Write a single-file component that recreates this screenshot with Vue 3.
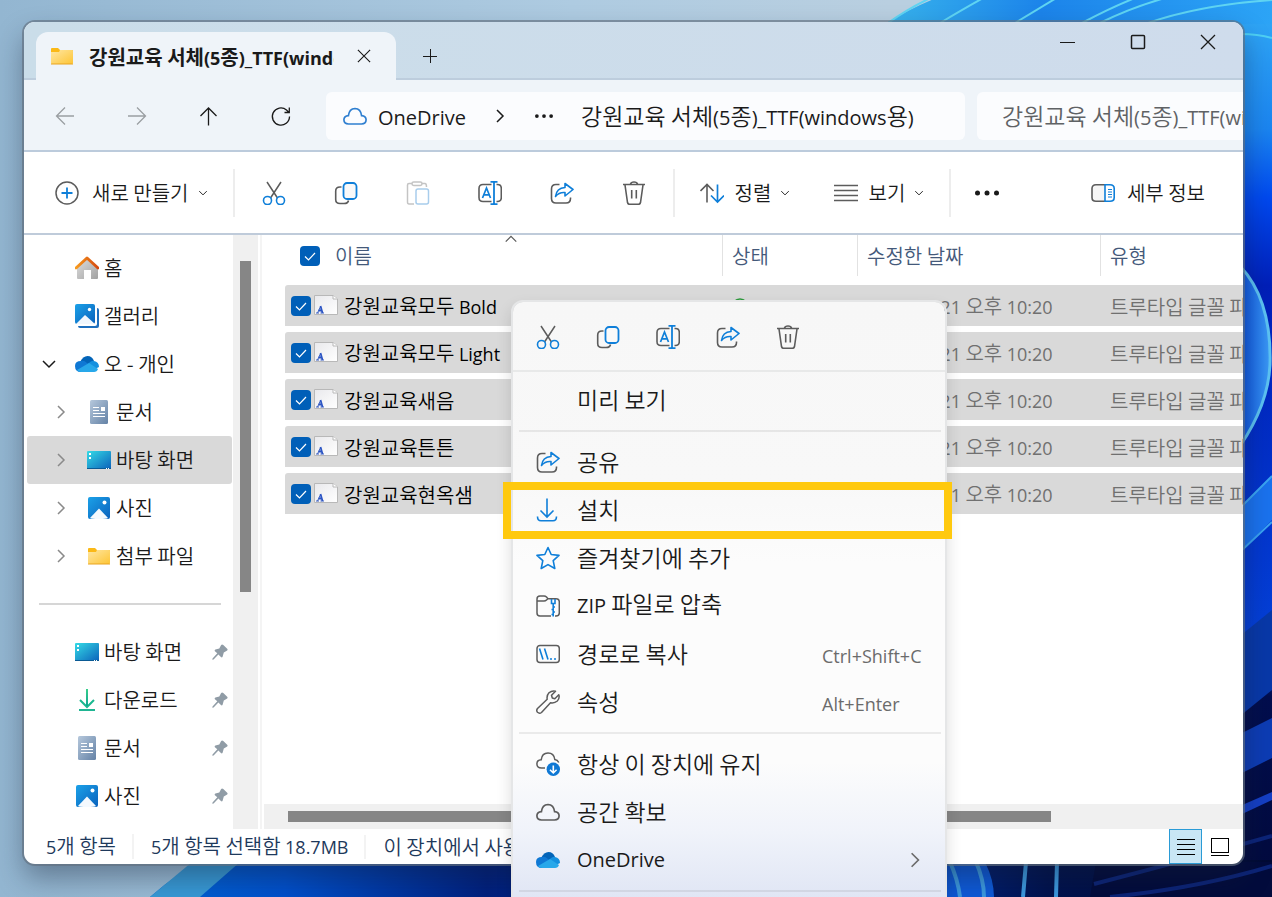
<template>
  <div class="desktop">
    <!-- fundo da área de trabalho -->
    <svg class="wallpaper" viewBox="0 0 1272 897" preserveAspectRatio="none" aria-hidden="true">
      <defs>
        <linearGradient id="wSky" x1="0" y1="0" x2="1" y2="0">
          <stop offset="0" stop-color="#93b6d1" />
          <stop offset="0.45" stop-color="#aecbe1" />
          <stop offset="0.7" stop-color="#b9cfe0" />
        </linearGradient>
        <linearGradient id="wTop" x1="0" y1="0" x2="1" y2="0">
          <stop offset="0" stop-color="#37b2ec" />
          <stop offset="0.4" stop-color="#1c84ea" />
          <stop offset="1" stop-color="#2ca4f6" />
        </linearGradient>
        <linearGradient id="wSide" x1="0" y1="0" x2="0" y2="1">
          <stop offset="0" stop-color="#2ea4f5" />
          <stop offset="0.12" stop-color="#1b85f0" />
          <stop offset="0.2" stop-color="#0048ee" />
          <stop offset="0.3" stop-color="#001fb8" />
          <stop offset="0.7" stop-color="#0440d8" />
          <stop offset="0.77" stop-color="#020e4e" />
          <stop offset="1" stop-color="#020a3c" />
        </linearGradient>
        <linearGradient id="wFloor" x1="0" y1="0" x2="1" y2="0">
          <stop offset="0" stop-color="#0064d4" />
          <stop offset="0.12" stop-color="#0050cc" />
          <stop offset="0.3" stop-color="#00207e" />
          <stop offset="0.62" stop-color="#0031a4" />
          <stop offset="0.8" stop-color="#01124e" />
          <stop offset="1" stop-color="#010a34" />
        </linearGradient>
        <linearGradient id="wPetal" x1="0" y1="0" x2="1" y2="0">
          <stop offset="0" stop-color="#0a50e0" />
          <stop offset="1" stop-color="#3c9af4" />
        </linearGradient>
      </defs>
      <rect width="1272" height="897" fill="url(#wSky)" />
      <path d="M888 22Q925 0 960 -10H1272V60H888Z" fill="url(#wTop)" />
      <g fill="none" stroke="#5fd4f2" stroke-width="2">
        <path d="M888 23Q912 6 935 -4" />
        <path d="M940 23Q965 8 985 -3" />
        <path d="M1015 23L1058 -3" />
        <path d="M1082 23Q1110 8 1135 -2" />
        <path d="M1100 23Q1130 8 1165 -2" />
        <path d="M1148 23Q1200 5 1272 0" />
      </g>
      <path d="M1240 24H1272V897H1240Z" fill="url(#wSide)" />
      <path d="M1240 34Q1258 34 1272 38" fill="none" stroke="#4ed0f4" stroke-width="2" />
      <path d="M1240 266Q1272 300 1270 365Q1268 405 1240 446Z" fill="url(#wPetal)" />
      <path d="M1240 266Q1272 300 1270 365Q1268 405 1240 446" fill="none" stroke="#5cc2f2" stroke-width="3" />
      <path d="M1240 508L1272 476V520L1240 552Z" fill="#1a72ee" />
      <path d="M1240 508L1272 476M1240 552L1272 522" fill="none" stroke="#3aa4f2" stroke-width="2" />
      <path d="M1240 636L1272 610V690L1240 716Z" fill="#0838a8" />
      <path d="M1240 734L1272 718V758L1240 774Z" fill="#0d3cb4" />
      <path d="M1240 806L1272 792V800L1240 815Z" fill="#153fc4" />
      <path d="M205 860H1272V897H150Q178 872 205 860Z" fill="url(#wFloor)" />
      <path d="M192 862H240L200 897H150Z" fill="#389ad6" />
      <path d="M945 862H985Q994 880 994 897H945Z" fill="#0e5ad8" />
      <path d="M950 862Q958 880 960 897M976 862Q984 880 984 897M1026 862L1023 897M1057 862L1056 897" fill="none" stroke="#3d9ae0" stroke-width="4" />
      <path d="M1096 862L1090 897H1272V862Z" fill="#020b3c" />
      <path d="M1094 884Q1180 862 1272 836M1110 897Q1200 888 1272 866" fill="none" stroke="#0c2478" stroke-width="4" />
    </svg>

    <!-- ícones reutilizados -->
    <svg class="sprite" aria-hidden="true">
      <defs>
        <linearGradient id="gFolder" x1="0" y1="0" x2="1" y2="1">
          <stop offset="0" stop-color="#ffe7a3" />
          <stop offset="1" stop-color="#fdc535" />
        </linearGradient>
        <linearGradient id="gPhoto" x1="0" y1="0" x2="1" y2="1">
          <stop offset="0" stop-color="#1ba1e8" />
          <stop offset="1" stop-color="#0a62bd" />
        </linearGradient>
        <linearGradient id="gDesk" x1="0" y1="0" x2="1" y2="1">
          <stop offset="0" stop-color="#34dbe6" />
          <stop offset="1" stop-color="#0c62bb" />
        </linearGradient>
        <linearGradient id="gDoc" x1="0" y1="0" x2="1" y2="1">
          <stop offset="0" stop-color="#b6c8dc" />
          <stop offset="1" stop-color="#6482a6" />
        </linearGradient>
        <linearGradient id="gHome" x1="0" y1="0" x2="1" y2="1">
          <stop offset="0" stop-color="#dedede" />
          <stop offset="1" stop-color="#a2a2a2" />
        </linearGradient>
        <linearGradient id="gRoof" x1="0" y1="0" x2="1" y2="0">
          <stop offset="0" stop-color="#f79a1e" />
          <stop offset="1" stop-color="#d5480f" />
        </linearGradient>
        <linearGradient id="gDown" x1="0" y1="0" x2="0" y2="1">
          <stop offset="0" stop-color="#37cf8a" />
          <stop offset="1" stop-color="#0fa393" />
        </linearGradient>
        <linearGradient id="gPage" x1="0" y1="0" x2="1" y2="1">
          <stop offset="0" stop-color="#e9e9ec" />
          <stop offset="1" stop-color="#ffffff" />
        </linearGradient>
      </defs>

      <symbol id="i-folder" viewBox="0 0 24 24">
        <path d="M1 5Q1 4 2 4H8L10 6H22Q23 6 23 7V19H1Z" fill="#fbb917" />
        <path d="M1 8H9L10 6H22Q23 6 23 7V19Q23 20 22 20H2Q1 20 1 19Z" fill="url(#gFolder)" />
        <path d="M1 20H23" stroke="#e9a420" />
      </symbol>
      <symbol id="i-home" viewBox="0 0 24 24">
        <path d="M2 11L12 2L23 11V22Q23 23 22 23H16V14H9V23H3Q2 23 2 22Z" fill="url(#gHome)" />
        <path d="M1 12L12 2L23 12" fill="none" stroke="url(#gRoof)" stroke-width="3" stroke-linejoin="round" stroke-linecap="round" />
      </symbol>
      <symbol id="i-gallery" viewBox="0 0 24 24">
        <path d="M22 4Q24 4 24 6V22Q24 24 22 24H5Q3 24 3 22H20Q22 22 22 20Z" fill="#1e6fbe" />
        <rect width="20" height="20" rx="2" fill="url(#gPhoto)" />
        <path d="M1 20L10 11L20 20Z" fill="#f1f7fd" />
        <circle cx="14.500" cy="5.500" r="1.700" fill="#fff" />
      </symbol>
      <symbol id="i-photo" viewBox="0 0 24 24">
        <rect x="1" y="1" width="22" height="22" rx="2" fill="url(#gPhoto)" />
        <path d="M3 22L12 12.500L21 22Q20 23 12 23Q4 23 3 22Z" fill="#f4f9fe" />
        <circle cx="17.500" cy="6.500" r="2" fill="#fff" />
      </symbol>
      <symbol id="i-drive" viewBox="0 0 24 24">
        <path d="M5 10Q8 4 12.500 4Q17 4 19 9L12 14Z" fill="#0364b8" />
        <path d="M6 9Q9 8 12 11L15 13L6 20Q0 20 0 14Q0 9 6 9Z" fill="#0f78d4" />
        <path d="M13 12Q17 8 19 9Q24 10 24 15L20 17Z" fill="#1490df" />
        <path d="M2 18L14 11L23 17Q22 20 19 20H6Q3 20 2 18Z" fill="#28a8ea" />
      </symbol>
      <symbol id="i-doc" viewBox="0 0 24 24">
        <rect x="3" width="18" height="24" rx="1.500" fill="url(#gDoc)" />
        <path d="M6 7.500H12M6 10.500H12M6 13.500H18M6 16.500H18" stroke="#fff" stroke-width="1.200" />
        <rect x="14" y="7" width="4" height="4" fill="#fff" />
      </symbol>
      <symbol id="i-desk" viewBox="0 0 24 24">
        <rect y="3" width="24" height="18" rx="1" fill="url(#gDesk)" />
        <path d="M0 20.500H24" stroke="#0a5a94" />
        <path d="M2 5h2v2h-2zM2 9h2v2h-2z" fill="#fff" />
        <path d="M19 20.500h1M21 20.500h1" stroke="#fff" />
      </symbol>
      <symbol id="i-dl" viewBox="0 0 24 24">
        <path d="M5 12L12 19L19 12" fill="none" stroke="#1ab88f" stroke-width="2" />
        <path d="M11 1h2v17h-2z" fill="url(#gDown)" />
        <path d="M4 22H20" stroke="#1fb592" stroke-width="2" />
      </symbol>
      <symbol id="i-pin" viewBox="0 0 16 16">
        <path d="M9 1.200Q10 -0.200 11.300 1L15.200 4.800Q16.200 6 14.800 6.800L11.800 8.600L10.600 12.800Q9.900 14 8.900 13L6.400 10.500L1.600 15.500L0.300 15.800L0.500 14.400L5.300 9.300L2.900 7.200Q2.200 6 3.400 5.500L7.300 4.400Z" fill="#909ca6" />
      </symbol>
      <symbol id="i-font" viewBox="0 0 24 24">
        <path d="M0.500 1.500H19L23.500 5V20.500H0.500Z" fill="url(#gPage)" stroke="#b8b8b8" />
        <path d="M19 1.500V5H23.500" fill="#fff" stroke="#b8b8b8" />
        <path d="M2 19H5M6.500 19H10M3.500 19L6.500 12.500" fill="none" stroke="#3a5fc0" />
        <path d="M6.500 12L8.500 19M4.600 16.500H8" fill="none" stroke="#2c55c4" stroke-width="1.800" />
      </symbol>

      <symbol id="i-cut" viewBox="0 0 24 24">
        <path d="M5 1L15.500 17M19 1L8.500 17" fill="none" stroke="#5c5c5c" stroke-width="1.500" />
        <circle cx="5.500" cy="19.500" r="4" fill="none" stroke="#0f7fd9" stroke-width="1.600" />
        <circle cx="18.500" cy="19.500" r="4" fill="none" stroke="#0f7fd9" stroke-width="1.600" />
      </symbol>
      <symbol id="i-copy" viewBox="0 0 24 24">
        <path d="M7.500 6H6Q1.700 6 1.700 10V18.500Q1.700 22.500 6 22.500H10Q14 22.500 14.500 19.500" fill="none" stroke="#5c5c5c" stroke-width="1.600" />
        <rect x="9.500" y="2" width="13" height="16" rx="3.500" fill="#f9f9f9" stroke="#0f7fd9" stroke-width="1.800" />
      </symbol>
      <symbol id="i-paste" viewBox="0 0 24 24">
        <path d="M7 2.500H3Q1.500 2.500 1.500 4V21Q1.500 23 3 23H8M16 2.500H19Q20.500 2.500 20.500 6" fill="none" stroke="#c4c4c4" stroke-width="1.500" />
        <rect x="6" y="1" width="10" height="3.500" rx="1.700" fill="#fff" stroke="#c4c4c4" stroke-width="1.500" />
        <rect x="10" y="8" width="12.500" height="15" rx="2" fill="#fff" stroke="#a8cdec" stroke-width="1.500" />
      </symbol>
      <symbol id="i-rename" viewBox="0 0 24 24">
        <path d="M13.500 3.500H5Q1 3.500 1 7.500V16.500Q1 20.500 5 20.500H13.500M18.500 3.500H19.500Q23.300 3.500 23.300 7.500V16.500Q23.300 20.500 19.500 20.500H18.500" fill="none" stroke="#5c5c5c" stroke-width="1.600" />
        <path d="M12.500 0.800H19.500M12.500 23.200H19.500M16 1V23" fill="none" stroke="#0f7fd9" stroke-width="1.800" />
        <path d="M4.500 17L8.500 7L12.500 17M6 13.800H11" fill="none" stroke="#0f7fd9" stroke-width="1.700" />
      </symbol>
      <symbol id="i-share" viewBox="0 0 24 24">
        <path d="M9.500 3.500H6Q1.500 3.500 1.500 8V17.500Q1.500 22 6 22H16Q20.500 22 20.500 17.500V16.500" fill="none" stroke="#5c5c5c" stroke-width="1.600" />
        <path d="M15 2.500L23 8.500L15 15V11.500Q9 11 5.500 15.500Q6.500 7 15 6.500Z" fill="none" stroke="#0f7fd9" stroke-width="1.600" stroke-linejoin="round" />
      </symbol>
      <symbol id="i-trash" viewBox="0 0 24 24">
        <path d="M1 3.500H23M8.500 3Q9 1 12 1Q15 1 15.500 3M3 4L5.500 21.500Q5.800 23.300 7.500 23.300H16.500Q18.200 23.300 18.500 21.500L21 4M9.700 9V17.500M14.300 9V17.500" fill="none" stroke="#5c5c5c" stroke-width="1.600" />
      </symbol>
      <symbol id="i-new" viewBox="0 0 24 24">
        <circle cx="12" cy="12" r="11" fill="none" stroke="#5c5c5c" stroke-width="1.500" />
        <path d="M12 6.500V17.500M6.500 12H17.500" stroke="#0f7fd9" stroke-width="1.800" />
      </symbol>
      <symbol id="i-sort" viewBox="0 0 24 24">
        <path d="M7 21.500V3.500M0.500 10L7 3.500L13.500 10" fill="none" stroke="#5c5c5c" stroke-width="1.600" />
        <path d="M17.500 3.500V21M11 14.500L17.500 21L24 14.500" fill="none" stroke="#0f7fd9" stroke-width="1.700" />
      </symbol>
      <symbol id="i-view" viewBox="0 0 24 24">
        <path d="M0 4.500H24M0 9.500H24M0 14.500H24M0 19.500H24" stroke="#5c5c5c" stroke-width="1.400" />
      </symbol>
      <symbol id="i-details" viewBox="0 0 24 24">
        <path d="M14 3.800H5Q1 3.800 1 7.500V16.500Q1 20.300 5 20.300H14" fill="#f6f6f6" stroke="#5c5c5c" stroke-width="1.600" />
        <path d="M14 3.800H19Q23.200 3.800 23.200 7.500V16.500Q23.200 20.300 19 20.300H14Z" fill="#fff" stroke="#0f7fd9" stroke-width="1.600" />
        <path d="M17 8.500H21M17 11H21M17 13.500H21M17 16H21" stroke="#0f7fd9" stroke-width="1.100" />
      </symbol>
      <symbol id="i-install" viewBox="0 0 24 24">
        <path d="M11 0.500V18.500M4.500 12.500L11 19L17.500 12.500M1.500 18.500Q1.500 22.800 5 22.800H17Q20.500 22.800 20.500 18.500" fill="none" stroke="#0f7fd9" stroke-width="1.600" />
      </symbol>
      <symbol id="i-star" viewBox="0 0 24 24">
        <path d="M12 1.500L15.200 8.500L23 9.400L17.200 14.600L18.800 22.500L12 18.600L5.200 22.500L6.800 14.600L1 9.400L8.800 8.500Z" fill="none" stroke="#0f7fd9" stroke-width="1.600" stroke-linejoin="round" />
      </symbol>
      <symbol id="i-zip" viewBox="0 0 24 24">
        <path d="M15 22H4Q1 22 1 19V5Q1 2 4 2H8Q9.500 2 10.500 3L12 4.700H20Q23.300 4.700 23.300 8V19Q23.300 22 20 22H19M1 7H8Q9.500 7 10.500 6L12 4.700" fill="none" stroke="#5c5c5c" stroke-width="1.500" />
        <path d="M15.500 5V9.500H19V5M17.200 10V22.500M17 13H19M15.500 15.500H17M17 18H19M15.500 20.500H17" fill="none" stroke="#0f7fd9" stroke-width="1.600" />
      </symbol>
      <symbol id="i-path" viewBox="0 0 24 24">
        <rect x="1" y="3.500" width="22.300" height="17" rx="3" fill="none" stroke="#5c5c5c" stroke-width="1.500" />
        <path d="M3.500 6.500L7 17.500M8.500 6.500L12 17.500M14 17h2M18 17h2" fill="none" stroke="#0f7fd9" stroke-width="1.600" />
      </symbol>
      <symbol id="i-wrench" viewBox="0 0 24 24">
        <path d="M19.500 1.200Q16 0.200 13 2.800Q10.500 5.500 11.200 9.200L1.500 18.500Q0 20.500 1.500 22.300Q3.500 24 5.500 22.500L14.500 12.800Q18.500 13.500 21.300 11Q24 8.200 22.800 4.800L18.800 8.700L16.300 8L15.500 5.300Z" fill="none" stroke="#5c5c5c" stroke-width="1.500" stroke-linejoin="round" />
      </symbol>
      <symbol id="i-keep" viewBox="0 0 24 24">
        <path d="M9 16H5.500Q1 16 0.900 12Q0.900 8 5.200 7.800Q6 1 12 1Q18 1 18.800 7.500Q21.500 7.800 22.800 10.500" fill="none" stroke="#5c5c5c" stroke-width="1.500" />
        <circle cx="17.300" cy="17.300" r="6.700" fill="#0f78d4" />
        <path d="M17.300 13.500V21M14 17.800L17.300 21L20.600 17.800" fill="none" stroke="#fff" stroke-width="1.600" />
      </symbol>
      <symbol id="i-cloud" viewBox="0 0 24 24">
        <path d="M5.500 20Q1 19.800 0.900 15.800Q1 12 5.400 11.700Q6.200 4.700 12 4.500Q17.800 4.700 18.600 11.700Q23 12 23.100 15.800Q23 19.800 18.500 20Z" fill="none" stroke="currentColor" stroke-width="1.700" />
      </symbol>

      <symbol id="i-back" viewBox="0 0 24 24">
        <path d="M21 12H3.500M12 3.500L3.500 12L12 20.500" fill="none" stroke="currentColor" stroke-width="1.300" />
      </symbol>
      <symbol id="i-forward" viewBox="0 0 24 24">
        <path d="M3 12H20.500M12 3.500L20.500 12L12 20.500" fill="none" stroke="currentColor" stroke-width="1.300" />
      </symbol>
      <symbol id="i-up" viewBox="0 0 24 24">
        <path d="M11.500 21.500V4M3.500 12L11.500 4L19.500 12" fill="none" stroke="currentColor" stroke-width="1.300" />
      </symbol>
      <symbol id="i-refresh" viewBox="0 0 24 24">
        <path d="M20.500 12.500A8.600 8.600 0 1 1 17.500 6L20 8.500M20.300 3.500V8.500H15.500" fill="none" stroke="currentColor" stroke-width="1.300" />
      </symbol>
      <symbol id="i-x" viewBox="0 0 16 16">
        <path d="M1 1L15 15M15 1L1 15" fill="none" stroke="currentColor" stroke-width="1.300" />
      </symbol>
      <symbol id="i-plus" viewBox="0 0 16 16">
        <path d="M8.500 1V15M1 8.500H15" fill="none" stroke="currentColor" />
      </symbol>
      <symbol id="i-min" viewBox="0 0 16 16">
        <path d="M0 8.500H15" stroke="currentColor" />
      </symbol>
      <symbol id="i-max" viewBox="0 0 16 16">
        <rect x="1.500" y="1.500" width="13" height="13" rx="1" fill="none" stroke="currentColor" stroke-width="1.500" />
      </symbol>
      <symbol id="i-right" viewBox="0 0 16 16">
        <path d="M5 2L11 8L5 14" fill="none" stroke="currentColor" stroke-width="1.500" />
      </symbol>
      <symbol id="i-down" viewBox="0 0 16 16">
        <path d="M2 5L8 11L14 5" fill="none" stroke="currentColor" stroke-width="1.500" />
      </symbol>
      <symbol id="i-dots" viewBox="0 0 24 24">
        <circle cx="2.500" cy="12" r="2.500" fill="currentColor" />
        <circle cx="12" cy="12" r="2.500" fill="currentColor" />
        <circle cx="21.500" cy="12" r="2.500" fill="currentColor" />
      </symbol>
      <symbol id="i-list" viewBox="0 0 24 24">
        <path d="M3 4.500H21M3 9.500H21M3 14.500H21M3 19.500H21" stroke="#000" />
      </symbol>
      <symbol id="i-thumb" viewBox="0 0 24 24">
        <rect x="3.500" y="3.500" width="17" height="14" fill="#fff" stroke="#000" />
        <path d="M3 20.500H21" stroke="#000" />
      </symbol>
      <symbol id="i-synced" viewBox="0 0 24 24">
        <circle cx="8" cy="12" r="8" fill="none" stroke="#2d9a3c" stroke-width="1.500" />
        <path d="M4 12L7 15L12 9" fill="none" stroke="#2d9a3c" stroke-width="1.500" />
      </symbol>
    </svg>

    <main class="window">
      <header class="titlebar">
        <div class="tab">
          <Icone nome="folder" />
          <span class="tab-title"><Texto :valor="pasta" /></span>
          <button class="tab-close" aria-label="탭 닫기"><Icone nome="x" :tam="14" /></button>
        </div>
        <button class="tab-new" aria-label="새 탭"><Icone nome="plus" :tam="16" /></button>
        <div class="caption">
          <button aria-label="최소화"><Icone nome="min" :tam="16" /></button>
          <button aria-label="최대화"><Icone nome="max" :tam="16" /></button>
          <button aria-label="닫기"><Icone nome="x" :tam="16" /></button>
        </div>
      </header>

      <nav class="navbar">
        <button class="nav-btn" disabled aria-label="뒤로"><Icone nome="back" /></button>
        <button class="nav-btn" disabled aria-label="앞으로"><Icone nome="forward" /></button>
        <button class="nav-btn" aria-label="위로"><Icone nome="up" /></button>
        <button class="nav-btn" aria-label="새로 고침"><Icone nome="refresh" /></button>
        <div class="breadcrumb grande">
          <Icone nome="cloud" class="azul" />
          <a href="#" class="crumb-root"><Texto valor="OneDrive" /></a>
          <Icone nome="right" :tam="16" />
          <button class="crumb-more" aria-label="더 보기"><Icone nome="dots" :tam="18" /></button>
          <a href="#"><Texto :valor="pasta" /></a>
        </div>
        <button class="search grande" aria-label="검색"><Texto :valor="pasta + ' 검색'" /></button>
      </nav>

      <section class="commands">
        <button class="cmd-new"><Icone nome="new" /><span>새로 만들기</span><Icone nome="down" :tam="10" /></button>
        <i class="sep"></i>
        <button v-for="a in acoes" :key="a.icone" class="cmd-icon" :aria-label="a.rotulo"><Icone :nome="a.icone" /></button>
        <i class="sep"></i>
        <button class="cmd-text"><Icone nome="sort" /><span>정렬</span><Icone nome="down" :tam="10" /></button>
        <button class="cmd-text"><Icone nome="view" /><span>보기</span><Icone nome="down" :tam="10" /></button>
        <i class="sep sep-last"></i>
        <button class="cmd-icon" aria-label="더 보기"><Icone nome="dots" /></button>
        <button class="cmd-details"><Icone nome="details" /><span>세부 정보</span></button>
      </section>

      <section class="content">
        <aside class="sidebar">
          <a v-for="item in arvore" :key="item.nome" href="#" class="side-item" :class="{ filho: item.filho, ativo: item.ativo }">
            <span class="seta"><Icone v-if="item.seta" :nome="item.seta" :tam="16" :class="item.seta" /></span>
            <Icone :nome="item.icone" />
            <span>{{ item.nome }}</span>
          </a>
          <hr />
          <a v-for="item in fixados" :key="item.nome" href="#" class="side-item">
            <span class="seta"></span>
            <Icone :nome="item.icone" />
            <span class="side-name">{{ item.nome }}</span>
            <Icone nome="pin" :tam="16" />
          </a>
        </aside>
        <div class="vscroll"><div class="vthumb"></div></div>

        <div class="files">
          <div class="files-body">
            <table>
              <thead>
                <tr>
                  <th class="c-name">
                    <label class="th head-name"><input type="checkbox" checked aria-label="모두 선택" />이름</label>
                    <Icone nome="down" :tam="14" class="caret" />
                  </th>
                  <th class="c-state"><div class="th">상태</div></th>
                  <th class="c-date"><div class="th">수정한 날짜</div></th>
                  <th><div class="th">유형</div></th>
                </tr>
              </thead>
              <tbody>
                <tr v-for="arq in arquivos" :key="arq">
                  <td>
                    <label class="file"><input type="checkbox" checked /><Icone nome="font" /><Texto :valor="arq" /></label>
                  </td>
                  <td class="meta"><Icone nome="synced" /></td>
                  <td class="meta"><Texto valor="2023-11-21 오후 10:20" /></td>
                  <td class="meta">트루타입 글꼴 파일</td>
                </tr>
              </tbody>
            </table>
          </div>
          <div class="hscroll"><div class="hthumb"></div></div>
        </div>
      </section>

      <footer class="status">
        <span><Texto valor="5개 항목" /></span>
        <span><Texto valor="5개 항목 선택함 18.7MB" /></span>
        <span>이 장치에서 사용 가능</span>
        <div class="modes">
          <button class="on" aria-label="자세히"><Icone nome="list" /></button>
          <button aria-label="큰 아이콘"><Icone nome="thumb" /></button>
        </div>
      </footer>
    </main>

    <!-- menu de contexto -->
    <div class="menu grande" role="menu">
      <div class="menu-tools">
        <button v-for="a in acoesMenu" :key="a.icone" :aria-label="a.rotulo"><Icone :nome="a.icone" /></button>
      </div>
      <template v-for="(grupo, g) in grupos" :key="g">
        <button v-for="op in grupo" :key="op.nome" class="menu-item" :class="{ destaque: op.destaque }" role="menuitem">
          <span class="menu-icon"><Icone v-if="op.icone" :nome="op.icone" /></span>
          <span class="menu-label"><Texto :valor="op.nome" /></span>
          <span v-if="op.atalho" class="atalho">{{ op.atalho }}</span>
          <Icone v-if="op.sub" nome="right" :tam="18" class="sub" />
        </button>
        <div class="menu-sep"></div>
      </template>
    </div>
  </div>
</template>

<script setup>
import { h } from 'vue'

const pasta = '강원교육 서체(5종)_TTF(windows용)'

const Icone = (props) =>
  h('svg', { class: 'icone', width: props.tam || 24, height: props.tam || 24 }, [
    h('use', { href: '#i-' + props.nome })
  ])
Icone.props = ['nome', 'tam']

// separa os trechos latinos, que usam uma fonte menor que a do coreano
const Texto = (props) =>
  h(
    'span',
    { class: 'texto' },
    props.valor
      .split(/([!-~]+)/)
      .filter(Boolean)
      .map((t) => (/[!-~]/.test(t) ? h('span', { class: 'en' }, t) : t))
  )
Texto.props = ['valor']

const acoes = [
  { icone: 'cut', rotulo: '잘라내기' },
  { icone: 'copy', rotulo: '복사' },
  { icone: 'paste', rotulo: '붙여넣기' },
  { icone: 'rename', rotulo: '이름 바꾸기' },
  { icone: 'share', rotulo: '공유' },
  { icone: 'trash', rotulo: '삭제' }
]
const acoesMenu = acoes.filter((a) => a.icone !== 'paste')

const arvore = [
  { nome: '홈', icone: 'home' },
  { nome: '갤러리', icone: 'gallery' },
  { nome: '오 - 개인', icone: 'drive', seta: 'down' },
  { nome: '문서', icone: 'doc', seta: 'right', filho: true },
  { nome: '바탕 화면', icone: 'desk', seta: 'right', filho: true, ativo: true },
  { nome: '사진', icone: 'photo', seta: 'right', filho: true },
  { nome: '첨부 파일', icone: 'folder', seta: 'right', filho: true }
]

const fixados = [
  { nome: '바탕 화면', icone: 'desk' },
  { nome: '다운로드', icone: 'dl' },
  { nome: '문서', icone: 'doc' },
  { nome: '사진', icone: 'photo' }
]

const arquivos = [
  '강원교육모두 Bold',
  '강원교육모두 Light',
  '강원교육새음',
  '강원교육튼튼',
  '강원교육현옥샘'
]

const grupos = [
  [{ nome: '미리 보기' }],
  [
    { nome: '공유', icone: 'share' },
    { nome: '설치', icone: 'install', destaque: true },
    { nome: '즐겨찾기에 추가', icone: 'star' },
    { nome: 'ZIP 파일로 압축', icone: 'zip' },
    { nome: '경로로 복사', icone: 'path', atalho: 'Ctrl+Shift+C' },
    { nome: '속성', icone: 'wrench', atalho: 'Alt+Enter' }
  ],
  [
    { nome: '항상 이 장치에 유지', icone: 'keep' },
    { nome: '공간 확보', icone: 'cloud' },
    { nome: 'OneDrive', icone: 'drive', sub: true }
  ]
]
</script>

<style>
body {
  overflow: hidden;
}

.icone {
  display: block;
  flex: none;
}

.texto {
  white-space: pre;
}

.texto .en {
  font-family: "Open Sans", sans-serif;
  font-size: 18px;
  font-weight: 400;
}

.tab-title .texto .en {
  font-weight: 700;
}

.grande .texto .en {
  font-size: 20px;
}
</style>

<style scoped>
.desktop {
  position: relative;
  box-sizing: border-box;
  height: 100vh;
  padding: 22px 29px 33px 24px;
  overflow: hidden;
  display: flex;
  font-family: "Noto Sans CJK KR", sans-serif;
  font-size: 20px;
  font-weight: 350;
  line-height: 24px;
  color: #1a1a1a;
}

.desktop * {
  box-sizing: border-box;
}

.wallpaper {
  position: absolute;
  inset: 0;
  width: 100%;
  height: 100%;
}

.sprite {
  position: absolute;
  width: 0;
  height: 0;
}

button {
  border: 0;
  padding: 0;
  background: none;
  font: inherit;
  color: inherit;
  display: flex;
  align-items: center;
  justify-content: center;
}

a {
  color: inherit;
  text-decoration: none;
}

/* ===== JANELA ===== */
.window {
  position: relative;
  flex: 1;
  min-width: 0;
  display: flex;
  flex-direction: column;
  overflow: hidden;
  border-radius: 11px;
  background: #fff;
  box-shadow: 0 0 0 2px rgba(98, 112, 128, 0.65), 0 14px 28px rgba(20, 30, 50, 0.4);
}

.titlebar {
  display: flex;
  height: 58px;
  flex: none;
  padding-left: 12px;
  background: linear-gradient(90deg, #cadde9, #cfdcec);
  box-shadow: inset 0 -2px #bdcddd;
}

.tab {
  display: flex;
  align-items: center;
  width: 360px;
  height: 48px;
  margin-top: 10px;
  padding: 0 14px;
  border-radius: 12px 12px 0 0;
  background: #eff4f9;
  font-weight: 700;
}

.tab-title {
  flex: 1;
  margin: 0 16px 0 15px;
  padding-top: 2px;
  overflow: hidden;
}

.tab-close {
  width: 28px;
  height: 28px;
  margin-right: 4px;
}

.tab-new {
  width: 68px;
  padding-top: 10px;
}

.caption {
  display: flex;
  height: 40px;
  margin-left: auto;
}

.caption button {
  width: 70px;
}

/* ===== NAVEGAÇÃO ===== */
.navbar {
  display: flex;
  align-items: center;
  flex: none;
  height: 72px;
  padding: 2px 0 0 5px;
  background: #eff4f9;
  border-bottom: 2px solid #bccbdc;
}

.nav-btn {
  width: 72px;
  height: 48px;
}

.nav-btn:disabled {
  color: #9a9ea2;
}

.breadcrumb,
.search {
  height: 48px;
  border-radius: 6px;
  background: #fbfcfe;
  font-size: 23px;
}

.breadcrumb {
  display: flex;
  flex: 1;
  align-items: center;
  margin: 0 12px 0 9px;
  padding-left: 17px;
}

.azul {
  color: #2f7fd0;
}

.crumb-root {
  margin: 0 26px 0 11px;
}

.crumb-more {
  width: 42px;
  margin: 0 16px 0 15px;
}

.search {
  width: 266px;
  padding-left: 25px;
  justify-content: flex-start;
  overflow: hidden;
  color: #5f6265;
  border-radius: 6px 0 0 6px;
}

/* ===== COMANDOS ===== */
.commands {
  display: flex;
  align-items: center;
  flex: none;
  height: 83px;
  border-bottom: 2px solid #bfcbda;
}

.cmd-new {
  width: 209px;
  padding-left: 31px;
  justify-content: flex-start;
}

.cmd-new span {
  margin: 0 10px 0 13px;
}

.sep {
  width: 2px;
  height: 48px;
  margin-right: 3px;
  background: #ededed;
}

.cmd-icon {
  width: 72px;
  height: 48px;
}

.sep:nth-of-type(2) {
  margin: 0 3px;
}

.cmd-text {
  width: 134px;
}

.cmd-text span {
  margin: 0 9px 0 11px;
}

.sep-last {
  margin: 0 0 0 3px;
}

.cmd-details {
  margin: 0 38px 0 auto;
  gap: 12px;
}

/* ===== CONTEÚDO ===== */
.content {
  display: flex;
  flex: 1;
  min-height: 0;
}

.sidebar {
  width: 209px;
  padding: 9px 1px 0 3px;
  overflow: hidden;
}

.side-item {
  display: flex;
  align-items: center;
  height: 48px;
  padding: 0 4px 0 14px;
  border-radius: 3px;
  white-space: nowrap;
}

.side-item .seta {
  width: 34px;
}

.side-item .icone + span {
  margin-left: 5px;
}

.filho {
  padding-left: 26px;
}

.ativo {
  background: #d9d9d9;
}

.right {
  color: #8a8a8a;
}

.side-name {
  flex: 1;
}

.sidebar hr {
  height: 2px;
  margin: 23px 11px 23px 12px;
  border: 0;
  background: #d6d6d6;
}

.vscroll {
  width: 25px;
  padding: 26px 7px;
  background: #f0f0f0;
}

.vthumb {
  width: 11px;
  height: 59%;
  min-height: 331px;
  background: #868686;
}

.files {
  display: flex;
  flex: 1;
  flex-direction: column;
  min-width: 0;
  margin-left: 2px;
  border-left: 2px solid #f4f4f4;
}

.files-body {
  flex: 1;
  overflow: hidden;
  padding-left: 23px;
}

table {
  width: 100%;
  table-layout: fixed;
  border-spacing: 0;
}

.c-name {
  position: relative;
  width: 437px;
}

.c-state {
  width: 135px;
}

.c-date {
  width: 243px;
}

th {
  padding: 0 0 9px;
  font-weight: 350;
  text-align: left;
  color: #44597a;
}

.th {
  display: flex;
  align-items: center;
  height: 41px;
  padding-left: 9px;
  border-left: 1px solid #e2e2e2;
}

.head-name {
  gap: 15px;
  padding-left: 15px;
  border: 0;
}

.caret {
  position: absolute;
  top: -3px;
  left: 219px;
  transform: rotate(180deg);
  color: #5c5c5c;
}

td {
  height: 47px;
  padding: 0;
  border-bottom: 6px solid #fff;
  background: #d9d9d9;
  white-space: nowrap;
  overflow: hidden;
}

td:first-child {
  border-radius: 3px 0 0 3px;
}

.file {
  display: flex;
  align-items: center;
  padding-left: 6px;
  color: #000;
}

.file .icone {
  margin: 0 6px 0 3px;
}

.file .texto {
  padding-top: 2px;
}

.meta {
  padding: 2px 0 0 10px;
  color: #707070;
}

input[type="checkbox"] {
  appearance: none;
  flex: none;
  width: 20px;
  height: 20px;
  margin: 0;
  border-radius: 4px;
  background: #005fb8 url("data:image/svg+xml,%3Csvg xmlns='http://www.w3.org/2000/svg' viewBox='0 0 20 20'%3E%3Cpath d='M5 10.500L8.500 14L15 7' fill='none' stroke='white' stroke-width='1.200'/%3E%3C/svg%3E");
}

.hscroll {
  height: 25px;
  padding: 7px 24px;
  margin-left: 2px;
  background: #f0f0f0;
}

.hthumb {
  width: 82%;
  height: 11px;
  background: #868686;
}

/* ===== BARRA DE STATUS ===== */
.status {
  display: flex;
  align-items: center;
  flex: none;
  height: 35px;
  padding-left: 5px;
  color: #1e395b;
}

.status > span {
  padding: 0 16px 0 17px;
  border-left: 2px solid #f3f3f3;
}

.status > span:first-child {
  border: 0;
}

.modes {
  display: flex;
  gap: 1px;
  height: 35px;
  margin: 0 7px 0 auto;
}

.modes button {
  width: 33px;
  height: 35px;
}

.modes .on {
  border: 1px solid #2a9bd6;
  background: #c9e6f5;
}

/* ===== MENU DE CONTEXTO ===== */
.menu {
  position: absolute;
  top: 300px;
  left: 511px;
  width: 436px;
  padding-bottom: 40px;
  border: 2px solid #e5e6e7;
  border-radius: 12px;
  background: linear-gradient(#f7f7f7, #f8f8f8 180px, #fcfcfc 260px, #fcfcfc 460px, #f0f3fa 530px, #dfe5f4 600px);
  background-clip: padding-box;
  box-shadow: 0 8px 16px rgba(0, 0, 0, 0.14);
  font-size: 23px;
}

.menu-tools {
  display: flex;
  height: 70px;
  margin-bottom: 4px;
  padding: 2px 0 0 5px;
  border-bottom: 2px solid #e8e9e9;
}

.menu-tools button {
  width: 60px;
}

.menu-item {
  position: relative;
  width: 100%;
  height: 48px;
  padding-left: 23px;
  text-align: left;
}

.menu-icon {
  width: 24px;
  margin-right: 17px;
  color: #5c5c5c;
}

.menu-label {
  flex: 1;
  padding-bottom: 3px;
}

.atalho {
  width: 123px;
  padding-top: 4px;
  font-family: "Open Sans", sans-serif;
  font-size: 18px;
  font-weight: 400;
  color: #6b6b6b;
}

.sub {
  margin-right: 21px;
  color: #6b6b6b;
}

.menu-sep {
  height: 2px;
  margin: 6px 4px 6px 6px;
  background: rgba(0, 0, 0, 0.07);
}

.destaque::after {
  content: "";
  position: absolute;
  inset: -4px -7px -5px -10px;
  border: 8px solid #ffc90e;
}
</style>
